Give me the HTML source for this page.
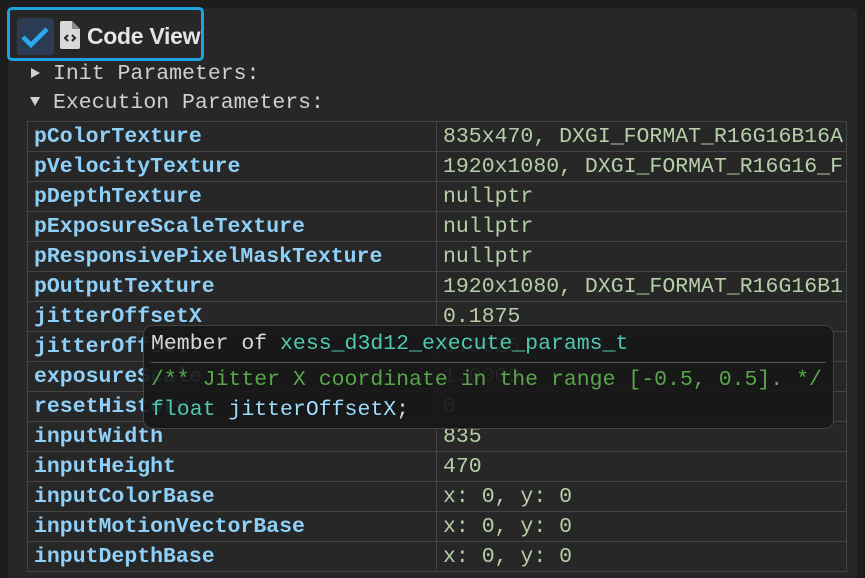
<!DOCTYPE html>
<html><head><style>
body{margin:0;width:865px;height:571px;background:#1c1c1c;overflow:hidden;position:relative;font-family:"Liberation Mono",monospace;}
.panel{position:absolute;left:8px;top:8px;width:849px;height:570px;background:#272727;border-radius:6px 6px 0 0;}
.hdr{position:absolute;left:7px;top:7px;width:197px;height:54px;border:3px solid #1ba4e0;border-radius:5px;box-sizing:border-box;}
.cb{position:absolute;left:17px;top:18px;width:37px;height:37px;background:#2b3b52;border-radius:3px;}
.title{position:absolute;left:87px;top:23px;font-family:"Liberation Sans",sans-serif;font-weight:bold;font-size:23px;letter-spacing:-0.3px;color:#e4e4e4;}
.tree{position:absolute;left:53px;color:#d0d0d0;font-size:21.5px;white-space:pre;}
table{position:absolute;left:27px;top:121px;border-collapse:collapse;}
td{border:1px solid #444;height:28px;padding:1px 0 0 6px;font-size:21.5px;line-height:28px;white-space:nowrap;overflow:hidden;box-sizing:content-box;}
td.k{width:402px;color:#8fd0f8;font-weight:bold;}
td.v{width:403px;color:#b5cea8;max-width:403px;}
.tip{position:absolute;left:143px;top:325px;width:691px;height:104px;background:rgba(24,24,24,0.93);border:1px solid #444;border-radius:9px;box-sizing:border-box;font-size:21.5px;white-space:pre;}
</style></head><body>
<div class="panel"></div>
<div class="hdr"></div>
<div class="cb"><svg width="37" height="37"><path d="M6 19 L14 27 L30 11" stroke="#29a9ee" stroke-width="4.5" fill="none"/></svg></div>
<svg style="position:absolute;left:59px;top:20px" width="22" height="30"><path d="M1 3 Q1 1 3 1 L13 1 L21 9 L21 27 Q21 29 19 29 L3 29 Q1 29 1 27Z" fill="#d8d8d8"/><path d="M13 1 L13 9 L21 9" fill="#8a8a8a"/><path d="M9 15 L6 18 L9 21 M13 15 L16 18 L13 21" stroke="#272727" stroke-width="2" fill="none"/></svg>
<div class="title">Code View</div>
<svg style="position:absolute;left:0;top:0" width="50" height="120"><path d="M31 68 L40 73 L31 78Z M30 97 L40 97 L35 106Z" fill="#d0d0d0"/></svg>
<div class="tree" style="top:62px">Init Parameters:</div>
<div class="tree" style="top:91px">Execution Parameters:</div>
<table>
<tr><td class="k">pColorTexture</td><td class="v">835x470, DXGI_FORMAT_R16G16B16A</td></tr>
<tr><td class="k">pVelocityTexture</td><td class="v">1920x1080, DXGI_FORMAT_R16G16_F</td></tr>
<tr><td class="k">pDepthTexture</td><td class="v">nullptr</td></tr>
<tr><td class="k">pExposureScaleTexture</td><td class="v">nullptr</td></tr>
<tr><td class="k">pResponsivePixelMaskTexture</td><td class="v">nullptr</td></tr>
<tr><td class="k">pOutputTexture</td><td class="v">1920x1080, DXGI_FORMAT_R16G16B1</td></tr>
<tr><td class="k">jitterOffsetX</td><td class="v">0.1875</td></tr>
<tr><td class="k">jitterOffsetY</td><td class="v">0.0625</td></tr>
<tr><td class="k">exposureScale</td><td class="v">1.0000</td></tr>
<tr><td class="k">resetHistory</td><td class="v">0</td></tr>
<tr><td class="k">inputWidth</td><td class="v">835</td></tr>
<tr><td class="k">inputHeight</td><td class="v">470</td></tr>
<tr><td class="k">inputColorBase</td><td class="v">x: 0, y: 0</td></tr>
<tr><td class="k">inputMotionVectorBase</td><td class="v">x: 0, y: 0</td></tr>
<tr><td class="k">inputDepthBase</td><td class="v">x: 0, y: 0</td></tr>
</table>
<div class="tip">
<div style="position:absolute;left:7px;top:6px;color:#d8d8d8">Member of <span style="color:#4ec9b0">xess_d3d12_execute_params_t</span></div>
<div style="position:absolute;left:7px;right:7px;top:36px;border-top:1px solid #555"></div>
<div style="position:absolute;left:7px;top:42px;color:#57a64a">/** Jitter X coordinate in the range [-0.5, 0.5]. */</div>
<div style="position:absolute;left:7px;top:72px;color:#4ec9b0">float <span style="color:#9cdcfe">jitterOffsetX</span><span style="color:#d8d8d8">;</span></div>
</div>
</body></html>
